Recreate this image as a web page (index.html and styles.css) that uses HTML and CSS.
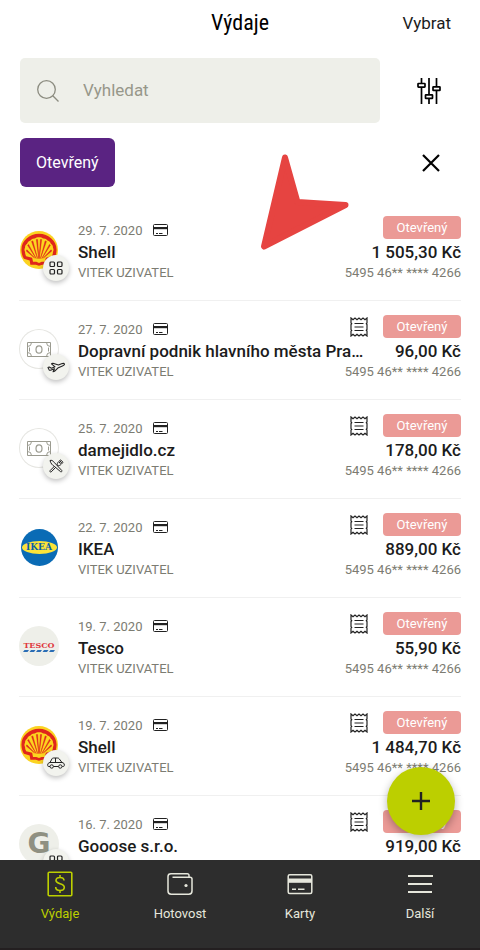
FILE: index.html
```html
<!DOCTYPE html>
<html lang="cs">
<head>
<meta charset="utf-8">
<meta name="viewport" content="width=device-width, initial-scale=1">
<title>Výdaje</title>
<link rel="stylesheet" href="styles.css">
</head>
<body>
<svg class="sprite" aria-hidden="true">
  <symbol id="i-card" viewBox="0 0 15 12">
    <rect x=".5" y=".5" width="14" height="11" rx="1" fill="none" stroke="currentColor"/>
    <path d="M1 3h13v2.200H1z" fill="currentColor"/>
    <path d="M3 9.500h2M6 9.500h3.500" stroke="currentColor" fill="none"/>
  </symbol>
  <symbol id="i-receipt" viewBox="0 0 18 20">
    <path d="M1 1l2 1.700L5 1l2 1.700L9 1l2 1.700L13 1l2 1.700L17 1v5l-.7.800.7.800v4.800l-.7.800.7.800V19l-2-1.700-2 1.700-2-1.700L9 19l-2-1.700L5 19l-2-1.700L1 19v-4.800l.7-.800-.7-.800V7.600l.7-.800L1 6z" fill="none" stroke="currentColor" stroke-width="1.200"/>
    <path d="M4.500 6.500h9M4.500 10h9M4.500 13.500h9" stroke="currentColor" stroke-width="1.200" fill="none"/>
  </symbol>
  <symbol id="i-note" viewBox="0 0 24 15">
    <g fill="none" stroke="currentColor">
      <path d="M.5.5h23v14H.5z"/>
      <path d="M.5 4.500Q4.500 4.500 4.500.5M19.500.5q0 4 4 4M.5 10.500q4 0 4 4M19.500 14.500q0-4 4-4M2.500 5.500v4M21.500 5.500v4"/>
      <ellipse cx="12" cy="7.500" rx="3" ry="3.700" stroke-width="1.200"/>
    </g>
  </symbol>
  <symbol id="i-grid" viewBox="0 0 14 14">
    <g fill="none" stroke="currentColor" stroke-width="1.200">
      <rect x="1" y="1" width="4.500" height="4.500" rx="1"/><rect x="8.500" y="1" width="4.500" height="4.500" rx="1"/>
      <rect x="1" y="8.500" width="4.500" height="4.500" rx="1"/><rect x="8.500" y="8.500" width="4.500" height="4.500" rx="1"/>
    </g>
  </symbol>
  <symbol id="i-plane" viewBox="0 0 18 18">
    <path d="M1 9.500l1.200-.5 2.300 1.200 3.500-1.400-3.500-3 1.400-.6L11.500 7l3-1.200c1.500-.6 2.700-.5 2.900.1.300.7-.5 1.500-2 2.200l-4.600 2-3.300 3.200-1.400.5 1.400-3-4 1.400c-.6.200-1 .1-1.400-.4z" fill="none" stroke="currentColor" stroke-width="1.100" stroke-linejoin="round"/>
  </symbol>
  <symbol id="i-food" viewBox="0 0 16 16">
    <g fill="none" stroke="currentColor" stroke-linejoin="round">
      <path d="M2 2.500c1.500-.7 3 .3 4 1.700l7.800 8.300c.6.700-.4 1.800-1.200 1.200L6.500 8.500C4.500 7.500 2.500 5 2 2.500z"/>
      <path d="M9.600 7.600c-.8-1.600 0-3 1-4L12.500 2l1 .6 1 1 .3 1-1.600 1.700c-1 1-2.300 1.700-3.600 1.300zM8 9l-4.800 4.900c-.7.600-1.800-.4-1.200-1.200l4.500-4.500M11 5l2.300-2.200M12 5.800l2-2"/>
    </g>
  </symbol>
  <symbol id="i-car" viewBox="0 0 18 14">
    <g fill="none" stroke="currentColor">
      <path d="M3 10.500H1.500c-.7 0-.8-.6-.8-1.500 0-1.500.8-2.200 2.300-2.500L5 2.800C5.300 2.200 5.700 2 6.500 2h4c.8 0 1.200.2 1.700.8L15 6.500c1.700.3 2.300 1 2.300 2.500 0 .9-.2 1.500-1 1.500h-1M6.500 10.500h5M3 6.500h12M8.500 2v4.500"/>
      <circle cx="4.700" cy="10.500" r="1.700"/><circle cx="13.300" cy="10.500" r="1.700"/>
    </g>
  </symbol>
  <symbol id="i-shell" viewBox="0 0 40 40">
    <circle cx="20" cy="20" r="20" fill="#fbd321"/>
    <path d="M20 3C10 3 1.500 10.500 1.500 19.500c0 4.200 1.200 7.400 2.600 9.800l6.100 1.700.7 4.500h5.600l3.500 1 3.500-1h5.600l.7-4.500 6.100-1.700c1.400-2.400 2.600-5.600 2.600-9.800C38.500 10.500 30 3 20 3z" fill="#e0261c"/>
    <path d="M20 6.500c-2 0-3.300.4-4.300 1.400-2-.3-3.600.6-4.600 2-2 .3-3.200 1.800-3.600 3.500-1.500.8-2.300 2.400-2.200 4.200-.8 1.200-.8 3 0 4.400 0 1.700.4 3.200 1.200 4.700l6.300 1.500.9 4.300h3.500l2.800 1.200 2.800-1.200h3.500l.9-4.300 6.300-1.500c.8-1.500 1.200-3 1.200-4.700.8-1.400.8-3.200 0-4.400.1-1.800-.7-3.400-2.200-4.200-.4-1.700-1.600-3.200-3.600-3.500-1-1.400-2.600-2.300-4.600-2-1-1-2.300-1.400-4.300-1.400z" fill="#fcd61f"/>
    <path d="M19.800 29L17.200 9h1.300zM20.200 29l2.600-20h-1.300zM18.500 29L12.200 11l1.300-.6zM21.500 29l6.300-18-1.300-.6zM17 29L8 15l1-.9zM23 29l9-14-1-.9zM15.500 28.500L6.500 21l.8-1.200zM24.500 28.500l9-7.500-.8-1.200z" fill="#e0261c" stroke="#e0261c" stroke-width=".5"/>
  </symbol>
</svg>

<div class="app">
  <header class="topbar">
    <h1 class="title">Výdaje</h1>
    <button class="select-btn" type="button">Vybrat</button>
  </header>

  <div class="search-row">
    <label class="search">
      <svg class="search-icon" viewBox="0 0 24 24" aria-hidden="true"><g fill="none" stroke="currentColor" stroke-width="1.300"><circle cx="10.500" cy="10.500" r="8.800"/><path d="M16.800 16.800l5.700 5.700"/></g></svg>
      <input class="search-input" type="text" placeholder="Vyhledat" aria-label="Vyhledat">
    </label>
    <button class="icon-btn" type="button" aria-label="Filtr">
      <svg width="24" height="26" viewBox="0 0 24 26"><g fill="#fff" stroke="currentColor" stroke-width="1.700"><path d="M4.500 0v26M12 0v26M19.500 0v26"/><rect x="1" y="5.500" width="7" height="3.600" rx=".5"/><rect x="8.500" y="16.800" width="7" height="3.600" rx=".5"/><rect x="16" y="8.800" width="7" height="3.600" rx=".5"/></g></svg>
    </button>
  </div>

  <div class="chips">
    <button class="chip" type="button">Otevřený</button>
    <button class="icon-btn" type="button" aria-label="Zrušit filtr">
      <svg width="18" height="18" viewBox="0 0 18 18"><path d="M1 1l16 16M17 1L1 17" stroke="currentColor" stroke-width="2.200" fill="none"/></svg>
    </button>
    <svg class="pointer" viewBox="0 0 90 98" aria-hidden="true"><path d="M25 4.500L37.500 49 85.500 52 4 93.500z" fill="#e64441" stroke="#e64441" stroke-width="6" stroke-linejoin="round"/></svg>
  </div>

  <ul class="list">
    <li class="row">
      <div class="avatar"><svg class="logo"><use href="#i-shell"/></svg><span class="cat"><svg width="14" height="14"><use href="#i-grid"/></svg></span></div>
      <div class="info">
        <div class="line meta"><span>29. 7. 2020</span><svg class="card"><use href="#i-card"/></svg><span class="status">Otevřený</span></div>
        <div class="line main"><span class="name">Shell</span><span>1 505,30 Kč</span></div>
        <div class="line sub"><span>VITEK UZIVATEL</span><span>5495 46** **** 4266</span></div>
      </div>
    </li>
    <li class="row">
      <div class="avatar outlined"><svg class="note"><use href="#i-note"/></svg><span class="cat"><svg width="18" height="18"><use href="#i-plane"/></svg></span></div>
      <div class="info">
        <div class="line meta"><span>27. 7. 2020</span><svg class="card"><use href="#i-card"/></svg><svg class="receipt"><use href="#i-receipt"/></svg><span class="status">Otevřený</span></div>
        <div class="line main"><span class="name">Dopravní podnik hlavního města Prahy, a.s.</span><span>96,00 Kč</span></div>
        <div class="line sub"><span>VITEK UZIVATEL</span><span>5495 46** **** 4266</span></div>
      </div>
    </li>
    <li class="row">
      <div class="avatar outlined"><svg class="note"><use href="#i-note"/></svg><span class="cat"><svg width="16" height="16"><use href="#i-food"/></svg></span></div>
      <div class="info">
        <div class="line meta"><span>25. 7. 2020</span><svg class="card"><use href="#i-card"/></svg><svg class="receipt"><use href="#i-receipt"/></svg><span class="status">Otevřený</span></div>
        <div class="line main"><span class="name">damejidlo.cz</span><span>178,00 Kč</span></div>
        <div class="line sub"><span>VITEK UZIVATEL</span><span>5495 46** **** 4266</span></div>
      </div>
    </li>
    <li class="row">
      <div class="avatar"><span class="ikea"><span class="ikea-word">IKEA</span></span></div>
      <div class="info">
        <div class="line meta"><span>22. 7. 2020</span><svg class="card"><use href="#i-card"/></svg><svg class="receipt"><use href="#i-receipt"/></svg><span class="status">Otevřený</span></div>
        <div class="line main"><span class="name">IKEA</span><span>889,00 Kč</span></div>
        <div class="line sub"><span>VITEK UZIVATEL</span><span>5495 46** **** 4266</span></div>
      </div>
    </li>
    <li class="row">
      <div class="avatar tesco"><span>TESCO</span><svg width="32" height="2" viewBox="0 0 32 2" aria-hidden="true"><path d="M1.500 0h4.500L4.500 2H0zM8 0h4.500L11 2H6.500zM14.500 0H19l-1.500 2H13zM21 0h4.500L24 2h-4.500zM27.500 0H32l-1.500 2H26z" fill="#2a6db5"/></svg></div>
      <div class="info">
        <div class="line meta"><span>19. 7. 2020</span><svg class="card"><use href="#i-card"/></svg><svg class="receipt"><use href="#i-receipt"/></svg><span class="status">Otevřený</span></div>
        <div class="line main"><span class="name">Tesco</span><span>55,90 Kč</span></div>
        <div class="line sub"><span>VITEK UZIVATEL</span><span>5495 46** **** 4266</span></div>
      </div>
    </li>
    <li class="row">
      <div class="avatar"><svg class="logo"><use href="#i-shell"/></svg><span class="cat"><svg width="18" height="14"><use href="#i-car"/></svg></span></div>
      <div class="info">
        <div class="line meta"><span>19. 7. 2020</span><svg class="card"><use href="#i-card"/></svg><svg class="receipt"><use href="#i-receipt"/></svg><span class="status">Otevřený</span></div>
        <div class="line main"><span class="name">Shell</span><span>1 484,70 Kč</span></div>
        <div class="line sub"><span>VITEK UZIVATEL</span><span>5495 46** **** 4266</span></div>
      </div>
    </li>
    <li class="row">
      <div class="avatar letter">G<span class="cat"><svg width="14" height="14"><use href="#i-grid"/></svg></span></div>
      <div class="info">
        <div class="line meta"><span>16. 7. 2020</span><svg class="card"><use href="#i-card"/></svg><svg class="receipt"><use href="#i-receipt"/></svg><span class="status">Otevřený</span></div>
        <div class="line main"><span class="name">Gooose s.r.o.</span><span>919,00 Kč</span></div>
      </div>
    </li>
  </ul>

  <nav class="tabs">
    <button class="fab" type="button" aria-label="Přidat"><svg width="18" height="18" viewBox="0 0 18 18"><path d="M9 0v18M0 9h18" stroke="currentColor" stroke-width="2.400"/></svg></button>
    <a class="tab active" href="#vydaje">
      <svg width="26" height="26" viewBox="0 0 26 26"><g fill="none" stroke="currentColor" stroke-width="1.600"><rect x="1.200" y="1.200" width="23.600" height="23.600" rx="1"/><path d="M17 9.500C17 7.500 15.500 6.500 13 6.500S9 7.700 9 9.500c0 4 8.300 2.500 8.300 6.700 0 2-1.800 3.300-4.300 3.300s-4.300-1.200-4.300-3.500M13 4v2.500M13 19.500V22"/></g></svg>
      <span>Výdaje</span>
    </a>
    <a class="tab" href="#hotovost">
      <svg width="26" height="26" viewBox="0 0 26 26"><g fill="none" stroke="currentColor" stroke-width="1.500"><path d="M22 6.200V4.500c0-1-.6-1.700-1.700-1.700H4C2 2.800 1 4 1 5.500V20c0 2 1.200 3.200 3.200 3.200h17.600c2 0 3.200-1.200 3.200-3.200V8c0-1.200-.8-1.800-2-1.800H5.500"/></g><circle cx="19" cy="14.500" r="1.600" fill="currentColor"/></svg>
      <span>Hotovost</span>
    </a>
    <a class="tab" href="#karty">
      <svg width="26" height="26" viewBox="0 0 26 26"><rect x="1.200" y="3.700" width="23.600" height="18.800" rx="1.500" fill="none" stroke="currentColor" stroke-width="1.500"/><path d="M1 7.500h24v4.300H1z" fill="currentColor"/><path d="M5 18.200h4M11 18.200h6.500" stroke="currentColor" stroke-width="1.500"/></svg>
      <span>Karty</span>
    </a>
    <a class="tab" href="#dalsi">
      <svg width="26" height="26" viewBox="0 0 26 26"><path d="M1 5h25M1 13h24M1 21h24" stroke="currentColor" stroke-width="2"/></svg>
      <span>Další</span>
    </a>
  </nav>
</div>
</body>
</html>
```
FILE: styles.css
```css
* { box-sizing: border-box; }

body {
  margin: 0;
  background: #fff;
  color: #1c1c1c;
  font-family: Roboto, "Liberation Sans", sans-serif;
}

button {
  border: 0;
  padding: 0;
  background: none;
  color: inherit;
  font: inherit;
}

svg { display: block; flex: none; }
.sprite { display: none; }

.app {
  display: flex;
  flex-direction: column;
  height: 100vh;
  overflow: hidden;
}

.topbar {
  display: grid;
  grid-template-columns: 1fr auto 1fr;
  align-items: center;
  height: 46px;
  padding: 0 29px;
  flex: none;
}
.title {
  grid-column: 2;
  margin: 0;
  color: #000;
  font: 400 22px/28px "Liberation Sans Narrow", "Roboto Condensed", Roboto, sans-serif;
}
.select-btn { justify-self: end; font-size: 17px; line-height: 24px; }

.search-row {
  display: flex;
  gap: 20px;
  padding: 12px 20px 0;
}
.search {
  display: flex;
  align-items: center;
  flex: 1;
  min-width: 0;
  height: 65px;
  padding-left: 16px;
  gap: 23px;
  border-radius: 5px;
  background: #eeefe9;
  color: #8c8c80;
}
.search-icon { width: 24px; height: 24px; }
.search-input {
  flex: 1;
  min-width: 0;
  padding: 0 0 2px;
  border: 0;
  outline: 0;
  background: none;
  color: inherit;
  font: 17px/24px Roboto, sans-serif;
}
.search-input::placeholder { color: #97978a; opacity: 1; }
.icon-btn {
  display: flex;
  align-items: center;
  justify-content: center;
  width: 60px;
  color: #000;
}
.search-row .icon-btn { padding-right: 2px; }

.chips {
  position: relative;
  display: flex;
  justify-content: space-between;
  padding: 15px 19px 15px 20px;
}
.chip {
  height: 49px;
  padding: 0 16px;
  border-radius: 6px;
  background: #5a2382;
  color: #fff;
  font-size: 16px;
}
.pointer {
  position: absolute;
  z-index: 1;
  top: 30px;
  left: 260px;
  width: 90px;
  height: 98px;
}

.list {
  flex: 1;
  min-height: 0;
  margin: 0;
  padding: 0 19px;
  overflow: hidden;
  list-style: none;
}
.row {
  display: flex;
  gap: 19px;
  padding: 14px 0 18px;
  border-bottom: 1px solid #f0f0f0;
}
.avatar {
  position: relative;
  display: flex;
  align-items: center;
  justify-content: center;
  flex: none;
  width: 40px;
  height: 40px;
  margin-top: 14px;
  border-radius: 50%;
}
.outlined { color: #9b9b90; box-shadow: inset 0 0 0 1px #e6e6e2; }
.logo { width: 38px; height: 38px; }
.note { width: 24px; height: 15px; }
.cat {
  position: absolute;
  top: 25px;
  left: 24px;
  display: flex;
  align-items: center;
  justify-content: center;
  width: 26px;
  height: 26px;
  border-radius: 50%;
  background: #f2f3ee;
  box-shadow: 0 2px 5px rgba(0, 0, 0, .25);
  color: #222;
}
.ikea {
  display: flex;
  align-items: center;
  justify-content: center;
  width: 37px;
  height: 37px;
  border-radius: 50%;
  background: #0a6bb5;
}
.ikea-word {
  width: 35px;
  border-radius: 50%;
  background: #fbe33a;
  color: #0a5fa8;
  font: 700 9px/13px "DejaVu Serif", serif;
  text-align: center;
}
.tesco {
  flex-direction: column;
  background: #eeefe9;
  color: #e0393e;
  font: 700 8px/10px "DejaVu Serif", serif;
}
.letter {
  background: #eeefe9;
  color: #8f9082;
  font: 700 28px/28px "DejaVu Sans", sans-serif;
}

.info { flex: 1; min-width: 0; }
.line { display: flex; justify-content: space-between; }
.meta {
  align-items: flex-end;
  justify-content: flex-start;
  height: 24px;
  color: #7c7c72;
  font-size: 13px;
  line-height: 18px;
}
.card { width: 15px; height: 12px; margin: 0 auto 4px 11px; color: #222; }
.receipt { width: 18px; height: 20px; margin: 0 15px 2px 0; color: #222; }
.status {
  align-self: flex-start;
  width: 78px;
  border-radius: 4px;
  background: #eb9a96;
  color: #fff;
  font-size: 13px;
  line-height: 23px;
  text-align: center;
}
.main { gap: 23px; font-size: 17px; font-weight: 500; line-height: 24px; white-space: nowrap; }
.name { min-width: 0; overflow: hidden; text-overflow: ellipsis; }
.sub { color: #7c7c72; font-size: 13px; line-height: 18px; }

.tabs {
  position: relative;
  display: grid;
  grid-template-columns: repeat(4, 1fr);
  flex: none;
  height: 90px;
  background: #2d2d2d;
  border-bottom: 2px solid #231f20;
}
.tab {
  display: flex;
  flex-direction: column;
  align-items: center;
  gap: 8px;
  padding-top: 11px;
  color: #e6e7dc;
  font-size: 13px;
  line-height: 18px;
  text-decoration: none;
}
.active { color: #bccf00; }
.fab {
  position: absolute;
  right: 25px;
  top: -93px;
  display: flex;
  align-items: center;
  justify-content: center;
  width: 68px;
  height: 68px;
  border-radius: 50%;
  background: #bccf00;
  box-shadow: 0 3px 8px rgba(0, 0, 0, .3);
  color: #222;
}
```
